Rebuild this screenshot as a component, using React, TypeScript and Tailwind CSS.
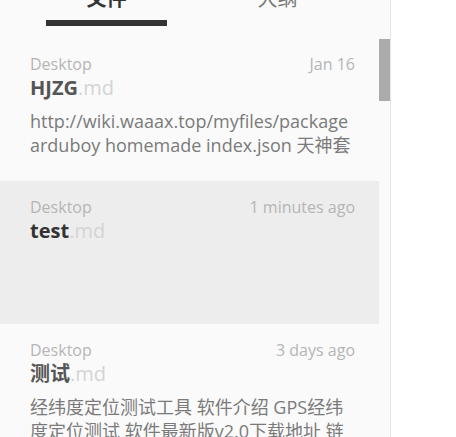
import React from "react";

const font = { fontFamily: '"Open Sans", "Noto Sans CJK SC", sans-serif' };

type Item = {
  folder: string;
  date: string;
  name: string;
  lines: string[];
  selected?: boolean;
};

const items: Item[] = [
  {
    folder: "Desktop",
    date: "Jan 16",
    name: "HJZG",
    lines: ["http://wiki.waaax.top/myfiles/package", "arduboy homemade index.json 天神套"],
  },
  { folder: "Desktop", date: "1 minutes ago", name: "test", lines: [], selected: true },
  {
    folder: "Desktop",
    date: "3 days ago",
    name: "测试",
    lines: ["经纬度定位测试工具 软件介绍 GPS经纬", "度定位测试 软件最新版v2.0下载地址 链"],
  },
];

function Row({ it }: { it: Item }) {
  return (
    <div
      className={
        "h-[143px] shrink-0 overflow-hidden pl-[30px] pr-[24px] pt-[15px] " +
        (it.selected ? "bg-[#ededed]" : "")
      }
    >
      <div className="flex justify-between text-[16px] leading-[22px] text-[#b5b5b5]">
        <span>{it.folder}</span>
        <span>{it.date}</span>
      </div>
      <div className="mt-[1px] text-[20px] leading-[24px]">
        <span className={"font-bold " + (it.selected ? "text-[#333333]" : "text-[#555555]")}>
          {it.name}
        </span>
        <span className="text-[#d4d4d4]">.md</span>
      </div>
      <div className="mt-[9px] text-[18px] leading-[24px] text-[#7a7a7a]">
        {it.lines.map((l, i) => (
          <div key={i} className="whitespace-nowrap">
            {l}
          </div>
        ))}
      </div>
    </div>
  );
}

export default function App() {
  return (
    <div className="flex h-[437px] w-[456px] overflow-hidden bg-white" style={font}>
      <div className="flex w-[391px] shrink-0 flex-col border-r border-[#e6e6e6] bg-[#fafafa]">
        <div className="mt-[-15px] flex shrink-0 gap-[50px] pl-[46px]">
          <div className="flex w-[121px] flex-col items-center">
            <div className="text-[20px] font-bold leading-[28px] text-[#333333]">文件</div>
            <div className="mt-[7px] h-[6px] w-full bg-[#333333]" />
          </div>
          <div className="flex w-[121px] flex-col items-center">
            <div className="text-[20px] leading-[28px] text-[#777777]">大纲</div>
          </div>
        </div>
        <div className="mt-[12px] flex min-h-0 flex-1">
          <div className="flex min-w-0 flex-1 flex-col">
            {items.map((it, i) => (
              <Row key={i} it={it} />
            ))}
          </div>
          <div className="w-[11px] shrink-0">
            <div className="mt-[1px] h-[62px] w-full bg-[#ababab]" />
          </div>
        </div>
      </div>
      <div className="flex-1" />
    </div>
  );
}
